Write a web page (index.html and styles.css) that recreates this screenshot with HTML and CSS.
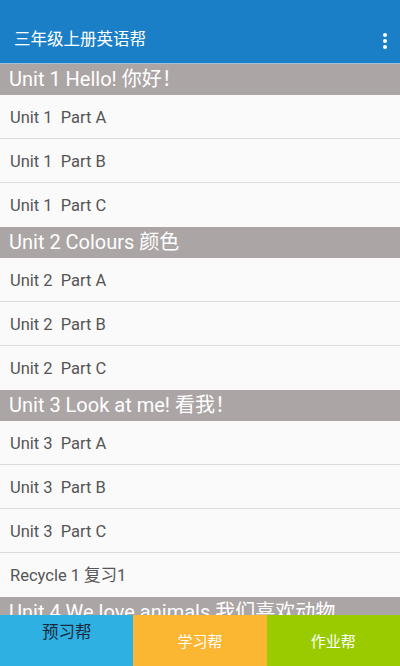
FILE: index.html
```html
<!DOCTYPE html>
<html lang="zh">
<head>
<meta charset="utf-8">
<title>三年级上册英语帮</title>
<link rel="stylesheet" href="styles.css">
</head>
<body>
<div class="app">
  <header class="toolbar">
    <span class="title">三年级上册英语帮</span>
    <span class="menu"><i></i><i></i><i></i></span>
  </header>
  <main class="list">
    <div class="unit">Unit 1 Hello! 你好！</div>
    <div class="row">Unit 1&nbsp; Part A</div>
    <div class="row">Unit 1&nbsp; Part B</div>
    <div class="row">Unit 1&nbsp; Part C</div>
    <div class="unit">Unit 2 Colours 颜色</div>
    <div class="row">Unit 2&nbsp; Part A</div>
    <div class="row">Unit 2&nbsp; Part B</div>
    <div class="row">Unit 2&nbsp; Part C</div>
    <div class="unit">Unit 3 Look at me! 看我！</div>
    <div class="row">Unit 3&nbsp; Part A</div>
    <div class="row">Unit 3&nbsp; Part B</div>
    <div class="row">Unit 3&nbsp; Part C</div>
    <div class="row">Recycle 1 复习1</div>
    <div class="unit">Unit 4 We love animals 我们喜欢动物</div>
  </main>
  <nav class="tabs">
    <div class="tab tab-blue">预习帮</div>
    <div class="tab tab-orange">学习帮</div>
    <div class="tab tab-green">作业帮</div>
  </nav>
</div>
</body>
</html>
```
FILE: styles.css
```css
* { box-sizing: border-box; }
html, body { margin: 0; padding: 0; }
body {
  font-family: Roboto, "Noto Sans CJK SC", sans-serif;
  background: #fafafa;
}
.app {
  width: 400px;
  height: 666px;
  display: flex;
  flex-direction: column;
  overflow: hidden;
}
.toolbar {
  flex: 0 0 64px;
  height: 64px;
  background: #1a7fc7;
  display: flex;
  align-items: flex-end;
  justify-content: space-between;
  padding: 0 14px 12px 14px;
  border-bottom: 1px solid #9fc3dd;
}
.title {
  color: #fff;
  font-size: 16.5px;
  line-height: 22px;
}
.menu {
  display: flex;
  flex-direction: column;
  gap: 2px;
  padding: 0 0 2px 0;
  margin-right: -1px;
}
.menu i {
  display: block;
  width: 4px;
  height: 4px;
  border-radius: 50%;
  background: #fff;
}
.list {
  flex: 1;
  overflow: hidden;
  min-height: 0;
}
.unit {
  height: 31px;
  background: #aba5a5;
  color: #fff;
  font-size: 20px;
  line-height: 31px;
  padding-left: 9px;
  white-space: nowrap;
}
.row {
  height: 44px;
  background: #fafafa;
  border-bottom: 1px solid #dcdcdc;
  color: #555;
  font-size: 16.5px;
  line-height: 45px;
  padding-left: 10px;
}
.row:has(+ .unit) { border-bottom: none; }
.tabs {
  flex: 0 0 51px;
  display: flex;
}
.tab {
  flex: 1;
  display: flex;
  justify-content: center;
  font-size: 15px;
  color: #fff;
  padding-top: 15px;
}
.tab-blue {
  background: #2eb0e3;
  color: #1a2a3a;
  font-size: 16.5px;
  padding-top: 4px;
}
.tab-orange { background: #fbb632; }
.tab-green { background: #99cb00; }
```
